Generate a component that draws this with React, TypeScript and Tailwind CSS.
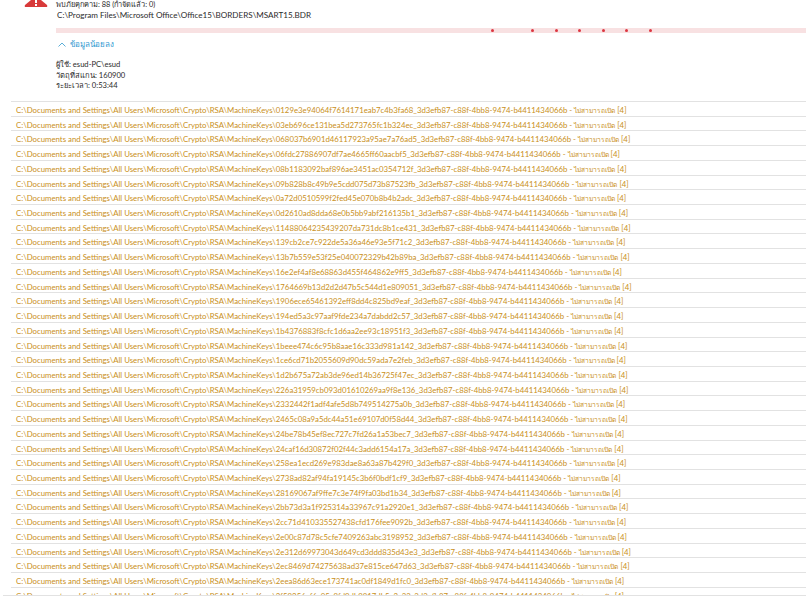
const machineKeys = [
  '0129e3e94064f7614171eab7c4b3fa68',
  '03eb696ce131bea5d273765fc1b324ec',
  '068037b6901d46117923a95ae7a76ad5',
  '06fdc27886907df7ae4665ff60aacbf5',
  '08b1183092baf896ae3451ac0354712f',
  '09b828b8c49b9e5cdd075d73b87523fb',
  '0a72d0510599f2fed45e070b8b4b2adc',
  '0d2610ad8dda68e0b5bb9abf216135b1',
  '11488064235439207da731dc8b1ce431',
  '139cb2ce7c922de5a36a46e93e5f71c2',
  '13b7b559e53f25e040072329b42b89ba',
  '16e2ef4af8e68863d455f464862e9ff5',
  '1764669b13d2d2d47b5c544d1e809051',
  '1906ece65461392eff8dd4c825bd9eaf',
  '194ed5a3c97aaf9fde234a7dabdd2c57',
  '1b4376883f8cfc1d6aa2ee93c18951f3',
  '1beee474c6c95b8aae16c333d981a142',
  '1ce6cd71b2055609d90dc59ada7e2feb',
  '1d2b675a72ab3de96ed14b36725f47ec',
  '226a31959cb093d01610269aa9f8e136',
  '2332442f1adf4afe5d8b749514275a0b',
  '2465c08a9a5dc44a51e69107d0f58d44',
  '24be78b45ef8ec727c7fd26a1a53bec7',
  '24caf16d30872f02f44c3add6154a17a',
  '258ea1ecd269e983dae8a63a87b429f0',
  '2738ad82af94fa19145c3b6f0bdf1cf9',
  '28169067af9ffe7c3e74f9fa03bd1b34',
  '2bb73d3a1f925314a33967c91a2920e1',
  '2cc71d410335527438cfd176fee9092b',
  '2e00c87d78c5cfe7409263abc3198952',
  '2e312d69973043d649cd3ddd835d43e3',
  '2ec8469d74275638ad37e815ce647d63',
  '2eea86d63ece173741ac0df1849d1fc0',
  '2f59256ef6c05c9fd9db9817db5a2c33',
];

const App = () => {
  return (
    <div className="h-[601px] w-[806px] overflow-hidden bg-white font-['Lato','Noto_Sans',sans-serif] text-[8.1px] text-[#2b2b2b]">
      {/* Scan summary */}
      <div className="flex h-[101px] items-start">
        <div className="w-[56px] shrink-0 pl-[24px]">
          <svg viewBox="0 0 24 7" className="h-[7px] w-[24px]">
            <path d="M7 0 L17 0 L23 5 Q24 7 22 7 L2 7 Q0 7 1 5 Z" fill="#d83a3a" />
            <rect x="11" y="0" width="2" height="3" fill="#ffffff" />
            <rect x="11" y="4" width="2" height="2" fill="#ffffff" />
          </svg>
        </div>
        <div className="min-w-0 flex-1">
          <p className="h-[10px] text-[7.4px] leading-[9px]">พบภัยคุกคาม: 88 (กำจัดแล้ว: 0)</p>
          <p className="ml-px h-[11px] leading-[11px]">C:\Program Files\Microsoft Office\Office15\BORDERS\MSART15.BDR</p>
          <div className="relative mt-[7px] h-[5px] bg-[#f8e1e2]">
            {[435, 475, 499, 522, 546, 569, 593].map(x => (
              <span key={x} className="absolute top-[1px] h-[3px] w-[3px] rounded-full bg-[#dc3540]" style={{ left: x }} />
            ))}
          </div>
          <div className="ml-[2px] mt-[7px] flex h-[9px] items-center gap-[4px] text-[#2f97cf]">
            <svg viewBox="0 0 8 5" className="h-[5px] w-[8px]" fill="none" stroke="#5aaed8" strokeWidth="1">
              <path d="M0.5 4.5 L4 1 L7.5 4.5" />
            </svg>
            <span className="text-[8px] leading-[9px]">ข้อมูลน้อยลง</span>
          </div>
          <div className="mt-[10px]">
            <p className="h-[10.5px] text-[7.6px] leading-[11px]">ผู้ใช้: esud-PC\esud</p>
            <p className="h-[10.5px] text-[7.6px] leading-[11px]">วัตถุที่สแกน: 160900</p>
            <p className="h-[10.5px] text-[7.6px] leading-[11px]">ระยะเวลา: 0:53:44</p>
          </div>
        </div>
      </div>

      {/* Locked files */}
      <div className="ml-[11px] h-[494px] overflow-hidden border-t border-[#e2e2e2]">
        {machineKeys.map(key => (
          <div key={key} className="h-[14.73px] truncate border-b border-[#e2e2e2] pl-[5px] pt-[1px] text-[7.8px] leading-[14px] text-[#c98f1a]">
            {`C:\\Documents and Settings\\All Users\\Microsoft\\Crypto\\RSA\\MachineKeys\\${key}_3d3efb87-c88f-4bb8-9474-b4411434066b - `}
            <span className="text-[6.6px]">ไม่สามารถเปิด</span> [4]
          </div>
        ))}
      </div>
      <div className="ml-[3px] h-px bg-[#e2e2e2]" />
    </div>
  );
};

export default App;
